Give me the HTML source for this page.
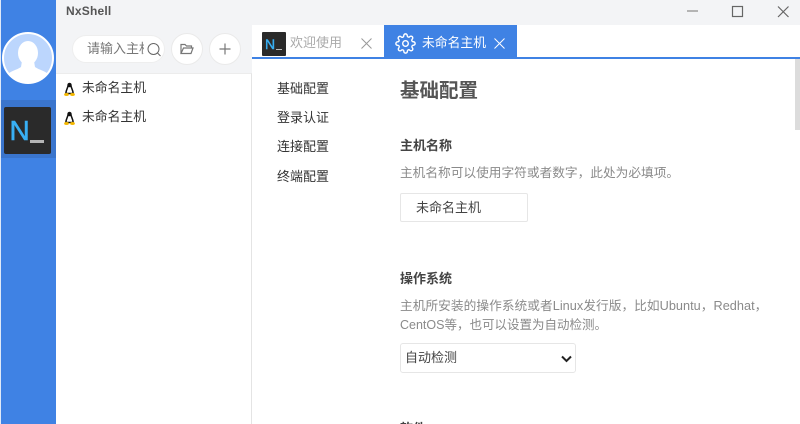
<!DOCTYPE html>
<html lang="zh"><head><meta charset="utf-8"><style>
*{box-sizing:border-box}
html,body{margin:0;padding:0;width:800px;height:424px;overflow:hidden;background:#fff}
#r{position:absolute;left:0;top:0;width:800px;height:424px;overflow:hidden;background:#fff;font-family:"Liberation Sans","Noto Sans CJK SC",sans-serif;color:#444;filter:blur(.3px)}
.a{position:absolute;white-space:nowrap}
.m{font-size:13px;line-height:18px;left:277px;color:#333}
.h{font-size:13px;font-weight:700;line-height:18px;left:400px;color:#444}
.d{font-size:12.7px;line-height:19px;left:400px;color:#8a8a8a}
.c{width:32px;height:32px;border-radius:50%;background:#fff;border:1px solid #eaeaea;top:33px}
.i{font-size:13px;line-height:18px;left:82px;color:#333}
</style></head><body><div id="r">
<div class="a" style="left:0;top:0;width:800px;height:25px;background:#f3f4f6"></div>
<div class="a" style="left:56px;top:25px;width:196px;height:49px;background:#f3f4f6"></div>
<div class="a" style="left:0;top:0;width:1px;height:424px;background:#dfe9f8"></div>
<div class="a" style="left:1px;top:0;width:55px;height:424px;background:#3f82e4"></div>
<div class="a" style="left:1px;top:100px;width:55px;height:58px;background:#3a75cd"></div>
<svg class="a" style="left:1px;top:31px" width="54" height="54" viewBox="0 0 54 54">
<defs><clipPath id="cp"><circle cx="27" cy="27" r="25"/></clipPath></defs>
<circle cx="27" cy="27" r="25" fill="#bcd6fd"/>
<g clip-path="url(#cp)" fill="#fff"><ellipse cx="27" cy="22" rx="10" ry="12"/><path d="M21 30h12l1 6c4 3 11 4 14 8l2 10H4l2-10c3-4 10-5 14-8z"/></g>
<circle cx="27" cy="27" r="25" fill="none" stroke="#fff" stroke-width="2"/>
</svg>
<div class="a" style="left:4px;top:107px;width:47px;height:47px;background:#2a2a2a;border-radius:2px"></div>
<div class="a" style="left:9.500px;top:114px;font-size:28px;line-height:34px;color:#38b0f5;-webkit-text-stroke:.6px #38b0f5">N</div>
<div class="a" style="left:30px;top:140px;width:14px;height:3px;background:#b5b5b5"></div>
<div class="a" style="left:66px;top:3px;font-size:12px;font-weight:700;line-height:16px;color:#555;letter-spacing:.2px">NxShell</div>
<svg class="a" style="left:680px;top:0" width="120" height="25" viewBox="0 0 120 25" fill="none" stroke="#666">
<path d="M7 11h11" stroke="#999" stroke-width="1.4"/><rect x="52.500" y="6.500" width="10" height="10" stroke-width="1.2"/><path d="M98 6.500l10.500 10.500M108.500 6.500L98 17" stroke-width="1.2"/></svg>
<div class="a" style="left:72px;top:35px;width:93px;height:28px;border-radius:14px;background:#fff;border:1px solid #eeeeee"></div>
<div class="a" style="left:87px;top:40px;width:57px;height:18px;overflow:hidden;font-size:13px;line-height:18px;color:#777">请输入主机</div>
<svg class="a" style="left:146px;top:42px" width="16" height="16" viewBox="0 0 16 16" fill="none" stroke="#666" stroke-width="1"><circle cx="7.500" cy="7" r="5.500"/><path d="M11.500 11l3 3"/></svg>
<div class="a c" style="left:171px"></div>
<div class="a c" style="left:209px"></div>
<svg class="a" style="left:180px;top:43px" width="14" height="12" viewBox="0 0 14 12" fill="none" stroke="#777" stroke-width="1.2"><path d="M1 10.500V1.500h4l1.500 1.500h5V5M1 10.500h10l2-5.500H3.500z"/></svg>
<svg class="a" style="left:219px;top:43px" width="12" height="12" fill="none" stroke="#777" stroke-width="1.2"><path d="M6 .5v11M.5 6h11"/></svg>
<div class="a" style="left:56px;top:73px;width:196px;height:351px;background:#fff;border-top:1px solid #ececec;border-right:1px solid #e4e4e4"></div>
<svg class="a" style="left:64px;top:82px" width="11" height="15" viewBox="0 0 11 15"><path d="M5.500 1.500C4.500 1.500 4 2.500 4 3.800C4 5.500 2 8 1.800 11.500H9.200C9 8 7 5.500 7 3.800C7 2.500 6.500 1.500 5.500 1.500z" fill="#fff" stroke="#111" stroke-width="1.500"/><ellipse cx="5.500" cy="3.200" rx="1.800" ry="2" fill="#111"/><ellipse cx="2.500" cy="12.500" rx="2.400" ry="1.500" fill="#f5b800"/><ellipse cx="8.500" cy="12.500" rx="2.400" ry="1.500" fill="#f5b800"/></svg>
<svg class="a" style="left:64px;top:111px" width="11" height="15" viewBox="0 0 11 15"><path d="M5.500 1.500C4.500 1.500 4 2.500 4 3.800C4 5.500 2 8 1.800 11.500H9.200C9 8 7 5.500 7 3.800C7 2.500 6.500 1.500 5.500 1.500z" fill="#fff" stroke="#111" stroke-width="1.500"/><ellipse cx="5.500" cy="3.200" rx="1.800" ry="2" fill="#111"/><ellipse cx="2.500" cy="12.500" rx="2.400" ry="1.500" fill="#f5b800"/><ellipse cx="8.500" cy="12.500" rx="2.400" ry="1.500" fill="#f5b800"/></svg>
<div class="a i" style="top:79px;left:82px;font-size:12.800px">未命名主机</div>
<div class="a i" style="top:108px;left:82px;font-size:12.800px">未命名主机</div>
<div class="a" style="left:252px;top:57px;width:548px;height:2px;background:#3f82e4"></div>
<div class="a" style="left:262px;top:32px;width:24px;height:24px;background:#2a2a2a;border-radius:1px"></div>
<div class="a" style="left:265px;top:36px;font-size:14px;line-height:16px;color:#38b0f5;-webkit-text-stroke:.4px #38b0f5">N</div>
<div class="a" style="left:276px;top:49px;width:6px;height:1px;background:#bbb"></div>
<div class="a" style="left:290px;top:34px;font-size:13px;line-height:18px;color:#aaa">欢迎使用</div>
<svg class="a" style="left:361px;top:38px" width="11" height="11" fill="none" stroke="#999"><path d="M.5.500l10 10M10.500.500l-10 10"/></svg>
<div class="a" style="left:384px;top:25px;width:133px;height:32px;background:#3f82e4"></div>
<svg class="a" style="left:395px;top:33px" width="21" height="21" viewBox="0 0 24 24" fill="none" stroke="#fff" stroke-width="1.600" stroke-linejoin="round"><circle cx="12" cy="12" r="3.200"/><path d="M19.400 15a1.650 1.650 0 0 0 .33 1.820l.06.06a2 2 0 1 1-2.830 2.830l-.06-.06a1.650 1.650 0 0 0-2.800 1.170V21a2 2 0 1 1-4 0v-.09a1.650 1.650 0 0 0-2.830-1.170l-.06.06a2 2 0 1 1-2.830-2.830l.06-.06a1.650 1.650 0 0 0-1.170-2.800H3a2 2 0 1 1 0-4h.09a1.650 1.650 0 0 0 1.170-2.830l-.06-.06a2 2 0 1 1 2.830-2.830l.06.06a1.650 1.650 0 0 0 1.820.33H9a1.650 1.650 0 0 0 1-1.510V3a2 2 0 1 1 4 0v.09a1.650 1.650 0 0 0 2.800 1.170l.06-.06a2 2 0 1 1 2.830 2.830l-.06.06a1.650 1.650 0 0 0-.33 1.820V9a1.650 1.650 0 0 0 1.510 1H21a2 2 0 1 1 0 4h-.09a1.650 1.650 0 0 0-1.510 1z"/></svg>
<div class="a" style="left:422px;top:34px;font-size:12.800px;line-height:18px;color:#fff">未命名主机</div>
<svg class="a" style="left:494px;top:38px" width="11" height="11" fill="none" stroke="#fff"><path d="M.5.500l10 10M10.500.500l-10 10"/></svg>
<div class="a" style="left:795px;top:59px;width:5px;height:71px;background:#dcdcdc"></div>
<div class="a m" style="top:80px">基础配置</div>
<div class="a m" style="top:109px">登录认证</div>
<div class="a m" style="top:138px">连接配置</div>
<div class="a m" style="top:168px">终端配置</div>
<div class="a" style="left:400px;top:79px;font-size:19.500px;font-weight:700;line-height:24px;color:#555">基础配置</div>
<div class="a h" style="top:137px">主机名称</div>
<div class="a d" style="top:164px">主机名称可以使用字符或者数字，此处为必填项。</div>
<div class="a" style="left:400px;top:193px;width:128px;height:29px;border:1px solid #e6e6e6;border-radius:2px;padding-left:15px;font-size:13px;line-height:28px;color:#444">未命名主机</div>
<div class="a h" style="top:270px">操作系统</div>
<div class="a d" style="top:297px;letter-spacing:.04px">主机所安装的操作系统或者Linux发行版，比如Ubuntu，Redhat，</div>
<div class="a d" style="top:316px;font-size:12.500px">CentOS等，也可以设置为自动检测。</div>
<div class="a" style="left:400px;top:343px;width:176px;height:30px;border:1px solid #e6e6e6;border-radius:3px;padding-left:4px;font-size:13px;line-height:28px;color:#444">自动检测</div>
<svg class="a" style="left:561px;top:355px" width="11" height="8" fill="none" stroke="#222" stroke-width="2"><path d="M1 1.500l4.500 4.500 4.500-4.500"/></svg>
<div class="a h" style="top:420px">软件</div>
</div></body></html>
